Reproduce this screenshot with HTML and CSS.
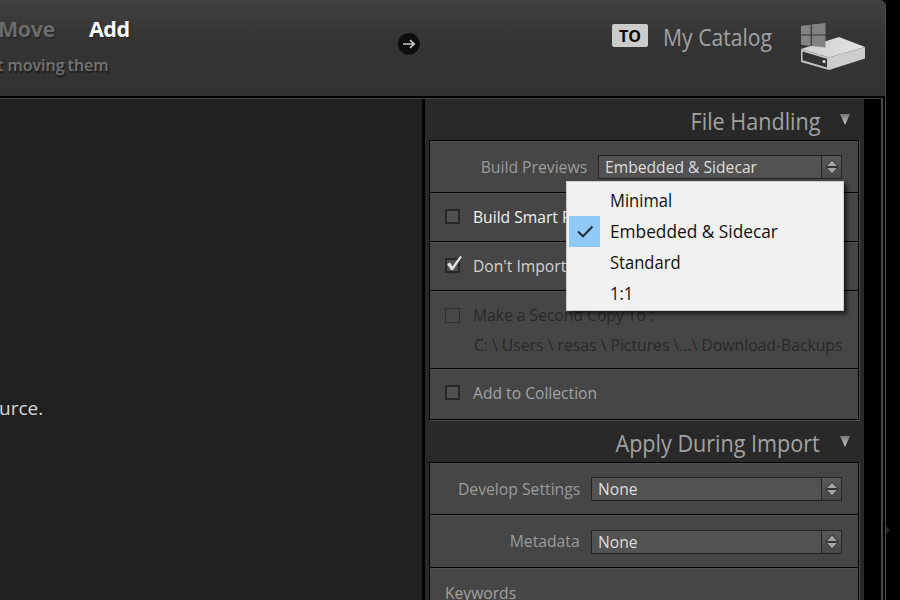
FILE: index.html
```html
<!DOCTYPE html>
<html lang="en">
<head>
<meta charset="utf-8">
<title>Import</title>
<link rel="stylesheet" href="styles.css">
</head>
<body>
<svg class="defs" width="0" height="0">
  <defs>
    <linearGradient id="arrowFill" x1="0" y1="0" x2="0" y2="1"><stop offset="0" stop-color="#777"/><stop offset="1" stop-color="#ccc"/></linearGradient>
    <linearGradient id="driveTop" x1="0" y1="0" x2="1" y2="0"><stop offset="0" stop-color="#cfcfcf"/><stop offset="1" stop-color="#e2e2e2"/></linearGradient>
    <symbol id="stepper" viewBox="0 0 12 16">
      <path d="M6 1.5 11 7H1z M1 9h10L6 14.5z" fill="#a2a2a2" stroke="#2c2c2c" stroke-width="1.4" paint-order="stroke"/>
    </symbol>
    <symbol id="disclosure" viewBox="0 0 10 11">
      <path d="M0 0h10L5 11z" fill="url(#arrowFill)"/>
    </symbol>
  </defs>
</svg>
<div class="window">
  <header class="topbar">
    <div class="modes">
      <div class="mode-list"><span class="mode">Move</span><span class="mode active">Add</span></div>
      <p class="hint">t moving<span class="hint-end">them</span></p>
    </div>
    <svg class="go" width="24" height="24" viewBox="0 0 24 24">
      <circle cx="12.5" cy="12.5" r="11" fill="#484848"/>
      <circle cx="12" cy="12" r="11" fill="#0d0d0d"/>
      <path d="M6 12h11M13 8l4.2 4-4.2 4" fill="none" stroke="#c8c8c8" stroke-width="1.7"/>
    </svg>
    <div class="target">
      <span class="badge">TO</span>
      <span class="catalog">My Catalog</span>
      <svg class="drive" width="66" height="50" viewBox="0 0 66 50">
        <path d="M1 26 39 14l26 10-36 10.5z" fill="url(#driveTop)"/>
        <path d="M29 34.5 65 24v11.5L29 47z" fill="#cdcdcd"/>
        <path d="M1 26l28 8.5V47L1 39z" fill="#c4c4c4"/>
        <path d="M2.5 28.6l24.5 7.2v8.6L2.5 37.2z" fill="#353535"/>
        <circle cx="24" cy="38.6" r="1.5" fill="#ddd"/>
        <path d="M1 3 10.6 1.8V11.4H1zM11.8 1.6 25.5 0V11.4H11.8zM1 12.6h9.6V23L1 21.8zM11.8 12.6H25.5v12L11.8 23z" fill="#838383"/>
      </svg>
    </div>
  </header>
  <div class="body">
    <main class="content"><p class="message">urce.</p></main>
    <aside class="panel">
      <h2 class="heading"><span class="title">File Handling</span><svg width="10" height="11"><use href="#disclosure"/></svg></h2>
      <section class="group">
        <div class="row previews">
          <span class="label">Build Previews</span>
          <div class="select select-short"><span class="value"><span class="text">Embedded &amp; Sidecar</span></span><span class="step"><svg width="12" height="16"><use href="#stepper"/></svg></span>
            <ul class="menu">
              <li><span class="item">Minimal</span></li>
              <li class="checked"><svg class="tick" width="31" height="31" viewBox="0 0 31 31"><path d="M9 15.5l5 4.8L23.5 10.5" fill="none" stroke="#222d38" stroke-width="2"/></svg><span class="item wide">Embedded &amp; Sidecar</span></li>
              <li><span class="item">Standard</span></li>
              <li><span class="item">1:1</span></li>
            </ul>
          </div>
        </div>
        <div class="row check"><span class="box"></span><span class="text bright">Build Smart Previews</span></div>
        <div class="row check"><span class="box"><svg class="mark" width="20" height="20" viewBox="0 0 20 20"><path d="M3 10l3-1.6 2.4 4.2L16 2l2 1L9 16H7z" fill="#e0e0e0"/></svg></span><span class="text light">Don't Import Suspected Duplicates</span></div>
        <div class="row second disabled">
          <div class="check-line"><span class="box"></span><span class="text">Make a Second Copy To :</span></div>
          <p class="path">C: \ Users \ resas \ Pictures \...\ Download-Backups</p>
        </div>
        <div class="row check collection"><span class="box"></span><span class="text">Add to Collection</span></div>
      </section>
      <h2 class="heading"><span class="title">Apply During Import</span><svg width="10" height="11"><use href="#disclosure"/></svg></h2>
      <section class="group">
        <div class="row develop">
          <span class="label">Develop Settings</span>
          <div class="select"><span class="value"><span class="text">None</span></span><span class="step"><svg width="12" height="16"><use href="#stepper"/></svg></span></div>
        </div>
        <div class="row metadata">
          <span class="label">Metadata</span>
          <div class="select"><span class="value"><span class="text">None</span></span><span class="step"><svg width="12" height="16"><use href="#stepper"/></svg></span></div>
        </div>
        <div class="row keywords"><span class="text">Keywords</span></div>
      </section>
    </aside>
    <div class="gutter"></div>
  </div>
</div>
<div class="edge"><svg width="4" height="8" viewBox="0 0 4 8"><path d="M0 0l4 4-4 4z" fill="#262626"/></svg></div>
</body>
</html>
```
FILE: styles.css
```css
* { box-sizing: border-box; }
body {
  margin: 0;
  width: 900px;
  height: 600px;
  overflow: hidden;
  display: flex;
  background: #000;
  color: #a2a2a2;
  font: 17px/24px "Open Sans", "Noto Sans", sans-serif;
  white-space: nowrap;
}
p, h2, ul { margin: 0; padding: 0; font-weight: 400; }
svg { display: block; flex: none; }
.defs { position: absolute; }

/* narrower letterforms, anchored to the side the text aligns to */
.text, .item, .catalog { display: inline-block; transform: scaleX(.92); transform-origin: left; }
.label, .title, .path { display: inline-block; transform: scaleX(.925); transform-origin: right; }

.window {
  width: 886px;
  height: 600px;
  border-right: 1px solid #4b4b4b;
  border-top-right-radius: 6px;
  overflow: hidden;
}
.topbar {
  height: 98px;
  display: flex;
  background: linear-gradient(#414141, #343434 40px, #323232);
  border-bottom: 2px solid #000;
}
.modes { width: 397px; padding-top: 13px; }
.mode-list { display: flex; gap: 34px; font-size: 21.5px; line-height: 32px; font-weight: 600; }
.mode { color: #6b6b6b; margin-left: -2px; text-shadow: 1px 1px 1px #222; font-weight: 700; letter-spacing: -.4px; }
.mode.active { color: #fff; margin-left: 0; }
.hint { color: #747474; font-size: 16px; line-height: 24px; padding-top: 8px; font-weight: 600; text-shadow: 1px 2px 1px #1c1c1c; margin-left: -3px; }
.hint-end { margin-left: 3px; }
.go { margin-top: 32px; }
.target { display: flex; margin-left: 191px; }
.badge {
  width: 36px;
  height: 23px;
  margin-top: 24px;
  border-radius: 2px;
  background: #cbcbcb;
  color: #090909;
  font-size: 16px;
  line-height: 25px;
  font-weight: 700;
  text-align: center;
}
.catalog { margin: 21px 0 0 15px; width: 137px; font-size: 23px; line-height: 32px; height: 32px; }
.drive { margin-top: 23px; }

.body {
  width: 883px;
  height: 502px;
  display: flex;
  border-top: 1px solid #424242;
  border-right: 2px solid #4b4b4b;
}
.content { width: 425px; border-right: 3px solid #000; background: #212121; padding-top: 296px; }
.message { color: #d8d8d8; font-size: 19px; line-height: 26px; margin-left: -1px; }
.panel { width: 439px; height: 501px; background: #292929; padding: 0 5px 0 4px; }
.gutter { width: 17px; background: #000; }

.heading {
  height: 41px;
  display: flex;
  justify-content: flex-end;
  align-items: center;
  gap: 20px;
  padding: 2px 9px 0 0;
  font-size: 23px;
  line-height: 32px;
}
.title { transform: scaleX(.938); }
.heading svg { margin-top: -2px; }
.group {
  border: 1px solid #000;
  box-shadow: 1px 1px #4b4b4b;
  background: #464646;
}
.group + .heading { height: 42px; padding-top: 3px; }
.row {
  border-bottom: 1px solid #000;
  box-shadow: inset 0 1px #505050;
}
.row:last-child { border-bottom: 0; }
.previews, .develop, .metadata {
  display: flex;
  align-items: center;
  justify-content: flex-end;
  padding-right: 16px;
  gap: 11px;
}
.previews, .develop { height: 52px; }
.metadata { height: 53px; }
.label { color: #9b9b9b; }
.select {
  position: relative;
  width: 251px;
  height: 24px;
  margin-top: 1px;
  display: flex;
  border: 1px solid #252525;
  background: #525252;
  color: #dedede;
}
.metadata .select { margin-top: 2px; }
.select-short { width: 244px; }
.value { flex: 1; padding-left: 6px; line-height: 22px; }
.step {
  width: 20px;
  border-left: 1px solid #252525;
  display: flex;
  align-items: center;
  justify-content: center;
  background: linear-gradient(#5a5a5a, #474747);
}
.check { height: 49px; padding-left: 15px; display: flex; align-items: center; gap: 13px; }
.box {
  position: relative;
  width: 15px;
  height: 15px;
  border: 2px solid #282828;
  background: #505050;
}
.check .box { margin-top: -1px; }
.mark { position: absolute; left: -3px; top: -6px; }
.bright { color: #f2f2f2; }
.light { color: #d2d2d2; }
.second { height: 78px; padding: 12px 16px 0 15px; display: flex; flex-direction: column; }
.check-line { display: flex; align-items: center; gap: 13px; }
.disabled { color: #292929; }
.disabled .box { border: 1px solid #303030; background: #484848; }
.path { margin-top: 6px; align-self: flex-end; }
.collection { height: 50px; padding-bottom: 2px; }
.keywords { height: 60px; padding: 13px 15px; }

.menu {
  position: absolute;
  z-index: 2;
  left: -33px;
  top: 25px;
  width: 278px;
  height: 130px;
  padding: 3px 2px;
  list-style: none;
  background: #f1f1f1;
  border: 1px solid #ccc;
  box-shadow: 3px 3px 4px rgba(0, 0, 0, .6);
  color: #101010;
  font-size: 18px;
}
.menu li { height: 31px; line-height: 31px; padding-left: 41px; }
.menu .checked { display: flex; padding-left: 0; gap: 10px; }
.wide { transform: scaleX(.96); }
.tick { background: #90c8f6; }
.edge { padding-top: 526px; }
```
